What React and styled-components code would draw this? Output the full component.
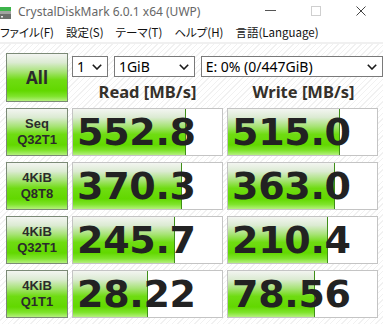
import React from "react";
import styled, { createGlobalStyle } from "styled-components";

const GlobalStyle = createGlobalStyle`
  html, body {
    margin: 0;
    padding: 0;
    background: #ffffff;
  }
  body {
    font-family: "Noto Sans", "Noto Sans CJK JP", sans-serif;
  }
`;

const green = `linear-gradient(
  to bottom,
  #f3f5f1 0%,
  #dcebd3 18%,
  #a6e374 38%,
  #6fdc12 55%,
  #62d800 78%,
  #7fe42c 90%,
  #b4f07e 100%
)`;

const Window = styled.div`
  width: 383px;
  height: 324px;
  overflow: hidden;
  background: #ffffff;
  display: flex;
  flex-direction: column;
`;

const TitleBar = styled.div`
  height: 22px;
  display: flex;
  align-items: center;
  flex-shrink: 0;
`;

const Title = styled.span`
  margin-left: 7px;
  font-size: 12px;
  color: #666666;
  flex: 1;
  white-space: nowrap;
`;

const Controls = styled.div`
  display: flex;
  align-items: center;
`;

const ControlButton = styled.div`
  width: 45px;
  height: 22px;
  display: flex;
  align-items: center;
  justify-content: center;
`;

const MenuBar = styled.div`
  height: 20px;
  display: flex;
  align-items: center;
  gap: 12px;
  font-family: "Noto Sans CJK JP", "Noto Sans", sans-serif;
  font-feature-settings: "palt";
  font-size: 11.5px;
  color: #111;
  flex-shrink: 0;
  border-bottom: 2px solid #f0f0f0;
`;

const MenuItem = styled.span`
  white-space: nowrap;
`;

const Main = styled.div`
  flex: 1;
  padding: 9px 0 0 6px;
  background: repeating-linear-gradient(
    135deg,
    #ffffff 0px,
    #ffffff 3px,
    #f1f1f1 3px,
    #f1f1f1 4px
  );
`;

const Board = styled.div`
  display: grid;
  grid-template-columns: 62px 151px 151px;
  grid-template-rows: 49px repeat(4, 48px);
  column-gap: 4px;
  row-gap: 6px;
`;

const GreenButton = styled.div`
  box-sizing: border-box;
  border: 1px solid #7b8a76;
  background: ${green};
  display: flex;
  flex-direction: column;
  align-items: center;
  justify-content: center;
  text-align: center;
  color: #2b2b2b;
  font-weight: 700;
  font-family: ${(p) => (p.$big ? `"Noto Sans", sans-serif` : `"Liberation Sans", Arial, sans-serif`)};
  font-size: ${(p) => (p.$big ? "17px" : "13px")};
  line-height: 16px;
`;

const TopPanel = styled.div`
  grid-column: 2 / span 2;
  display: flex;
  flex-direction: column;
`;

const Selects = styled.div`
  margin-top: 3px;
  display: flex;
  gap: 6px;
  width: 311px;
`;

const Dropdown = styled.div`
  box-sizing: border-box;
  width: ${(p) => p.$w}px;
  height: 21px;
  border: 1px solid #7a7a7a;
  background: #ffffff;
  display: flex;
  align-items: center;
  justify-content: space-between;
  padding: 0 5px 0 4px;
  font-size: 14px;
  color: #000;
  white-space: nowrap;
`;

const Headers = styled.div`
  display: grid;
  grid-template-columns: 151px 151px;
  column-gap: 5px;
  margin-top: 4px;
`;

const Header = styled.div`
  text-align: center;
  font-weight: 700;
  font-size: 16.5px;
  color: #34302a;
  line-height: 22px;
  white-space: nowrap;
`;

const ResultBox = styled.div`
  position: relative;
  box-sizing: border-box;
  border: 1px solid #c4c4c4;
  background: #ffffff;
  overflow: hidden;
  display: flex;
  align-items: center;
`;

const Fill = styled.div`
  position: absolute;
  left: 0;
  top: 0;
  bottom: 0;
  background: ${green};
  border-right: 1px solid #3f8e18;
`;

const Value = styled.span`
  position: relative;
  padding-left: 4px;
  font-family: "DejaVu Sans", Verdana, sans-serif;
  font-weight: 700;
  font-size: 38px;
  line-height: 46px;
  color: #222222;
  letter-spacing: -0.3px;
`;

const Chevron = () => (
  <svg width="10" height="6" viewBox="0 0 10 6">
    <path d="M0.8 0.8 L5 5 L9.2 0.8" fill="none" stroke="#1a1a1a" strokeWidth="1.6" />
  </svg>
);

const DriveIcon = () => (
  <svg width="11" height="15" viewBox="0 0 11 15">
    <rect x="0" y="3" width="11" height="4" fill="#3cb44a" />
    <rect x="0" y="7" width="11" height="3" fill="#a0a4a0" />
    <rect x="0" y="10" width="11" height="5" fill="#6c706c" />
    <rect x="1" y="12" width="2" height="1.5" fill="#e8e8e8" />
  </svg>
);

const rows = [
  { label: ["Seq", "Q32T1"], read: "552.8", rp: 0.752, write: "515.0", wp: 0.745 },
  { label: ["4KiB", "Q8T8"], read: "370.3", rp: 0.725, write: "363.0", wp: 0.711 },
  { label: ["4KiB", "Q32T1"], read: "245.7", rp: 0.678, write: "210.4", wp: 0.664 },
  { label: ["4KiB", "Q1T1"], read: "28.22", rp: 0.497, write: "78.56", wp: 0.577 },
];

function Result({ value, pct }) {
  return (
    <ResultBox>
      <Fill style={{ width: `${pct * 100}%` }} />
      <Value>{value}</Value>
    </ResultBox>
  );
}

export default function App() {
  return (
    <>
      <GlobalStyle />
      <Window>
        <TitleBar>
          <DriveIcon />
          <Title>CrystalDiskMark 6.0.1 x64 (UWP)</Title>
          <Controls>
            <ControlButton>
              <svg width="11" height="2" viewBox="0 0 11 2">
                <rect width="11" height="1" fill="#555" />
              </svg>
            </ControlButton>
            <ControlButton>
              <svg width="10" height="10" viewBox="0 0 10 10">
                <rect x="0.5" y="0.5" width="9" height="9" fill="none" stroke="#cfcfcf" />
              </svg>
            </ControlButton>
            <ControlButton>
              <svg width="10" height="10" viewBox="0 0 10 10">
                <path d="M0.5 0.5 L9.5 9.5 M9.5 0.5 L0.5 9.5" stroke="#444" strokeWidth="1" />
              </svg>
            </ControlButton>
          </Controls>
        </TitleBar>
        <MenuBar>
          <MenuItem>ファイル(F)</MenuItem>
          <MenuItem>設定(S)</MenuItem>
          <MenuItem>テーマ(T)</MenuItem>
          <MenuItem>ヘルプ(H)</MenuItem>
          <MenuItem>言語(Language)</MenuItem>
        </MenuBar>
        <Main>
          <Board>
            <GreenButton $big>All</GreenButton>
            <TopPanel>
              <Selects>
                <Dropdown $w={36}>
                  <span>1</span>
                  <Chevron />
                </Dropdown>
                <Dropdown $w={81}>
                  <span>1GiB</span>
                  <Chevron />
                </Dropdown>
                <Dropdown $w={183}>
                  <span>E: 0% (0/447GiB)</span>
                  <Chevron />
                </Dropdown>
              </Selects>
              <Headers>
                <Header>Read [MB/s]</Header>
                <Header>Write [MB/s]</Header>
              </Headers>
            </TopPanel>
            {rows.map((r) => (
              <React.Fragment key={r.label.join("")}>
                <GreenButton>
                  <span>{r.label[0]}</span>
                  <span>{r.label[1]}</span>
                </GreenButton>
                <Result value={r.read} pct={r.rp} />
                <Result value={r.write} pct={r.wp} />
              </React.Fragment>
            ))}
          </Board>
        </Main>
      </Window>
    </>
  );
}
